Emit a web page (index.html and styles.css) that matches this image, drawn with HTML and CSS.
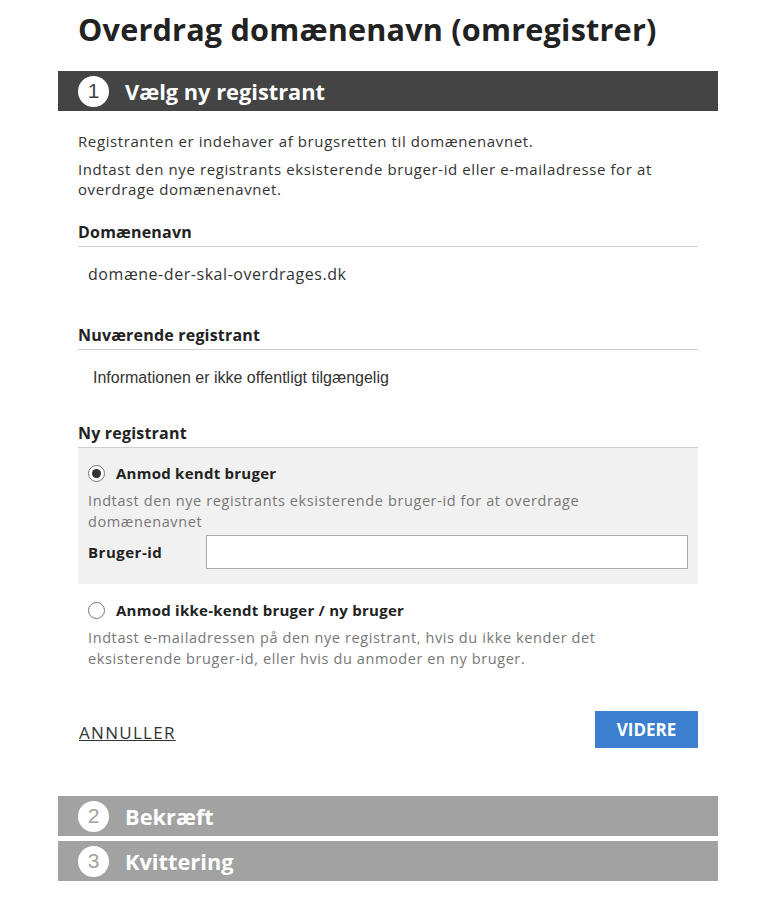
FILE: index.html
```html
<!DOCTYPE html>
<html lang="da">
<head>
<meta charset="utf-8">
<title>Overdrag domænenavn</title>
<link rel="stylesheet" href="styles.css">
</head>
<body>
<div class="page">
  <h1 class="title">Overdrag domænenavn (omregistrer)</h1>

  <section class="step step-active">
    <div class="step-head">
      <span class="step-num">1</span>
      <span class="step-label">Vælg ny registrant</span>
    </div>
    <div class="step-body">
      <p class="intro">Registranten er indehaver af brugsretten til domænenavnet.</p>
      <p class="intro">Indtast den nye registrants eksisterende bruger-id eller e-mailadresse for at overdrage domænenavnet.</p>

      <div class="field field-domain">
        <h2 class="field-title">Domænenavn</h2>
        <div class="field-value">domæne-der-skal-overdrages.dk</div>
      </div>

      <div class="field field-current">
        <h2 class="field-title">Nuværende registrant</h2>
        <div class="field-value field-value-arial">Informationen er ikke offentligt tilgængelig</div>
      </div>

      <div class="field field-new">
        <h2 class="field-title">Ny registrant</h2>
        <div class="option option-selected">
          <label class="option-label">
            <span class="radio radio-on"></span>
            <span>Anmod kendt bruger</span>
          </label>
          <p class="option-help">Indtast den nye registrants eksisterende bruger-id for at overdrage domænenavnet</p>
          <div class="input-row">
            <span class="input-label">Bruger-id</span>
            <input class="text-input" type="text">
          </div>
        </div>
        <div class="option">
          <label class="option-label">
            <span class="radio"></span>
            <span>Anmod ikke-kendt bruger / ny bruger</span>
          </label>
          <p class="option-help">Indtast e-mailadressen på den nye registrant, hvis du ikke kender det eksisterende bruger-id, eller hvis du anmoder en ny bruger.</p>
        </div>
      </div>

      <div class="actions">
        <a class="cancel" href="#">ANNULLER</a>
        <button class="next" type="button">VIDERE</button>
      </div>
    </div>
  </section>

  <section class="step step-inactive">
    <div class="step-head">
      <span class="step-num">2</span>
      <span class="step-label">Bekræft</span>
    </div>
  </section>
  <section class="step step-inactive">
    <div class="step-head">
      <span class="step-num">3</span>
      <span class="step-label">Kvittering</span>
    </div>
  </section>
</div>
</body>
</html>
```

FILE: styles.css
```css
* { box-sizing: border-box; }
html, body { margin: 0; padding: 0; background: #fff; }
body {
  font-family: "Open Sans", "Liberation Sans", sans-serif;
  color: #333;
}
.page {
  width: 660px;
  margin: 0 auto;
  padding-top: 8px;
}
.title {
  margin: 0 0 21px 20px;
  font-size: 30.6px;
  line-height: 42px;
  font-weight: 700;
  color: #222;
  letter-spacing: 0.2px;
}
.step-head {
  display: flex;
  align-items: center;
  height: 40px;
  padding-left: 20px;
  color: #fff;
}
.step-active .step-head { background: #444; }
.step-inactive { margin-top: 5px; }
.step-inactive .step-head { background: #a2a2a2; }
.step-num {
  width: 31px;
  height: 31px;
  border-radius: 50%;
  background: #fff;
  color: #444;
  display: flex;
  align-items: center;
  justify-content: center;
  font-family: "Liberation Sans", sans-serif;
  font-size: 21px;
}
.step-inactive .step-num { color: #a2a2a2; }
.step-label {
  margin-left: 16px;
  font-size: 21.8px;
  font-weight: 700;
}
.step-body {
  padding: 20px 20px 43px 20px;
}
.intro {
  margin: 0 0 8px 0;
  font-size: 15px;
  line-height: 20px;
  letter-spacing: 0.6px;
  color: #333;
}
.field-domain { margin-top: 23px; }
.field-current { margin-top: 41px; }
.field-new { margin-top: 35px; }
.field-title {
  margin: 0;
  padding-bottom: 4px;
  font-size: 16px;
  line-height: 20px;
  font-weight: 700;
  letter-spacing: 0.2px;
  color: #222;
  border-bottom: 1px solid #cfcfcf;
}
.field-value {
  padding: 17px 0 0 10px;
  font-size: 16px;
  line-height: 20px;
  letter-spacing: 0.55px;
  color: #333;
}
.field-value-arial {
  padding: 18px 0 0 15px;
  font-family: "Liberation Sans", Arial, sans-serif;
  font-size: 16px;
  letter-spacing: 0;
}
.option {
  padding: 15px 10px 4px 10px;
}
.option-selected {
  background: #f1f1f1;
  padding-bottom: 15px;
}
.option + .option { padding-top: 16px; }
.option-label {
  display: flex;
  align-items: center;
  font-size: 15px;
  line-height: 20px;
  font-weight: 700;
  letter-spacing: 0.25px;
  color: #222;
}
.radio {
  width: 17px;
  height: 17px;
  border-radius: 50%;
  border: 1px solid #777;
  background: #fff;
  margin-right: 11px;
  display: flex;
  align-items: center;
  justify-content: center;
}
.radio-on::after {
  content: "";
  width: 9px;
  height: 9px;
  border-radius: 50%;
  background: #333;
}
.option-help {
  margin: 8px 0 0 0;
  font-size: 14.5px;
  line-height: 20.5px;
  letter-spacing: 0.6px;
  color: #777;
}
.input-row {
  display: flex;
  align-items: center;
  margin-top: 3px;
}
.input-label {
  width: 118px;
  font-size: 15px;
  font-weight: 700;
  letter-spacing: 0.5px;
  color: #222;
}
.text-input {
  flex: 1;
  height: 34px;
  border: 1px solid #a9a9a9;
  background: #fff;
  margin: 0;
}
.actions {
  display: flex;
  justify-content: space-between;
  align-items: center;
  margin-top: 38px;
}
.cancel {
  margin: 5px 0 0 1px;
  font-size: 17px;
  letter-spacing: 1.3px;
  color: #333;
  text-decoration: underline;
}
.next {
  width: 103px;
  height: 37px;
  border: none;
  background: #3d7fcf;
  color: #fff;
  font-family: "Open Sans", "Liberation Sans", sans-serif;
  font-weight: 700;
  font-size: 17px;
}
```
